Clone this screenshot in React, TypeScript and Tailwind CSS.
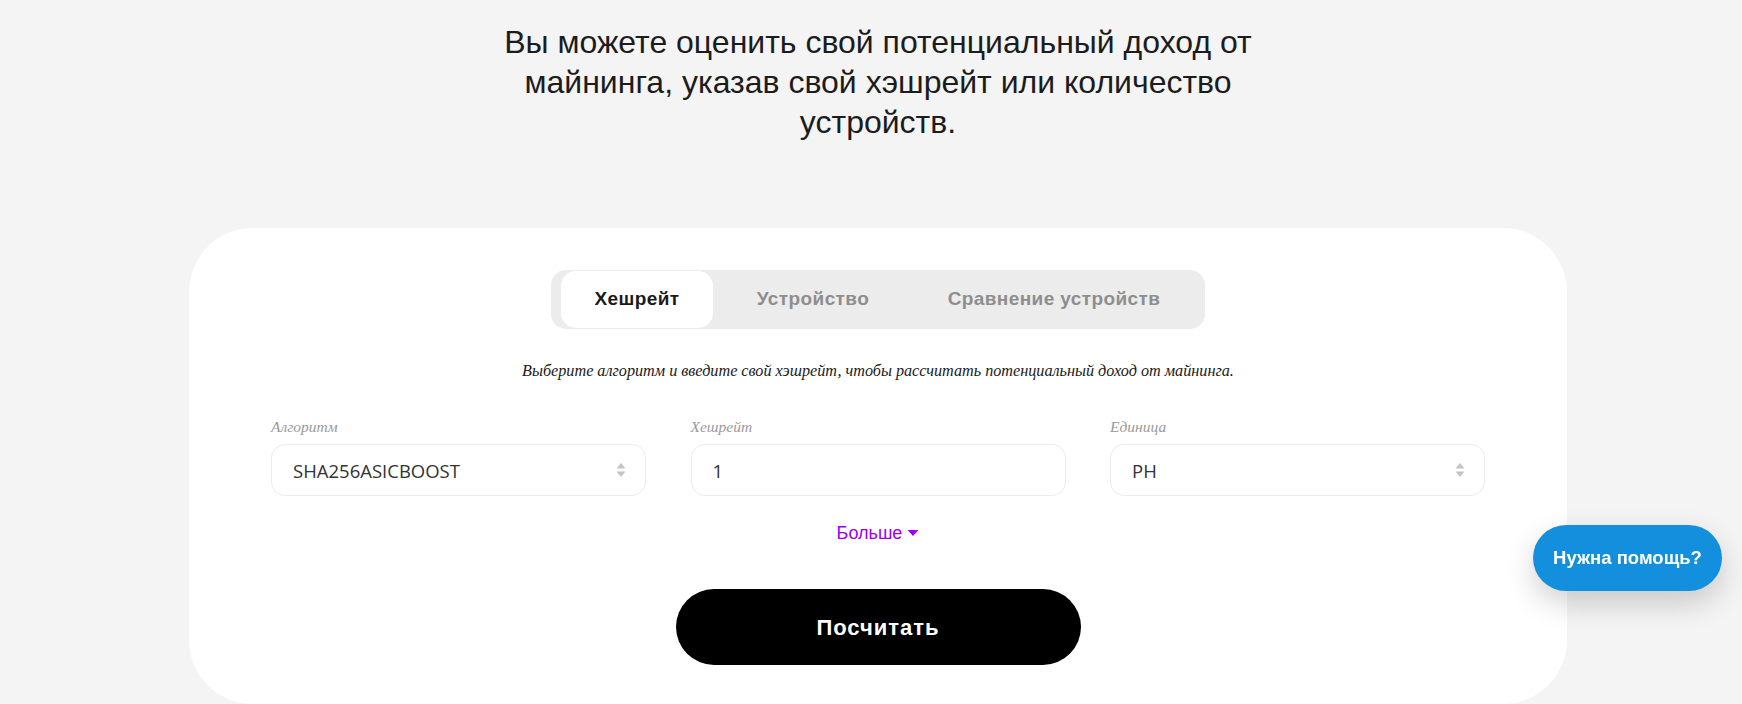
import React, { useState } from 'react';

const tabs = [
  { id: 'hash', label: 'Хешрейт', w: 'w-[152px]' },
  { id: 'device', label: 'Устройство', w: 'w-[200px]' },
  { id: 'compare', label: 'Сравнение устройств', w: 'w-[282px]' },
];

const SelectArrows = () => (
  <svg width="10" height="16" viewBox="0 0 10 16" className="shrink-0">
    <path d="M5 1 L9.5 6.5 L0.5 6.5 Z" fill="#c4c4c4" />
    <path d="M5 15 L9.5 9.5 L0.5 9.5 Z" fill="#c4c4c4" />
  </svg>
);

const Field = ({ label, value, select }: { label: string; value: string; select?: boolean }) => (
  <div className="flex flex-col w-[375px]">
    <label className="font-['Liberation_Serif',serif] italic text-[15.5px] leading-[18px] text-[#9a9a9a] mb-[8px]">
      {label}
    </label>
    <div className="h-[52px] rounded-[14px] border border-[#ececec] bg-white flex items-center justify-between pl-[21px] pr-[19px]">
      <span className="font-['Open_Sans',sans-serif] text-[18.5px] text-[#333] pt-[2px]">{value}</span>
      {select && <SelectArrows />}
    </div>
  </div>
);

export default function App() {
  const [tab, setTab] = useState('hash');

  return (
    <div className="min-h-[704px] bg-[#f4f4f4] overflow-hidden relative">
      <div className="ml-[189px] w-[1378px] flex flex-col items-center">
        <h1 className="pt-[22px] w-[800px] text-center font-['Liberation_Sans',Arial,sans-serif] text-[32px] leading-[40px] text-[#1c1c1c]">
          Вы можете оценить свой потенциальный доход от майнинга, указав свой хэшрейт или количество устройств.
        </h1>

        <div className="mt-[86px] w-full h-[476px] bg-white rounded-[64px] flex flex-col items-center pt-[42px]">
          <div className="h-[59px] bg-[#ececec] rounded-[15px] px-[10px] flex items-stretch py-[1px]">
            {tabs.map(t => (
              <button
                key={t.id}
                onClick={() => setTab(t.id)}
                className={`${t.w} rounded-[15px] font-['Liberation_Sans',Arial,sans-serif] font-bold text-[19px] tracking-[0.4px] ${
                  tab === t.id ? 'bg-white text-[#1a1a1a]' : 'text-[#8e8e8e]'
                }`}
              >
                {t.label}
              </button>
            ))}
          </div>

          <p className="mt-[33px] font-['Liberation_Serif',serif] italic text-[16.2px] leading-[19px] text-[#1a1a1a]">
            Выберите алгоритм и введите свой хэшрейт, чтобы рассчитать потенциальный доход от майнинга.
          </p>

          <div className="mt-[37px] w-[1214px] flex justify-between">
            <Field label="Алгоритм" value="SHA256ASICBOOST" select />
            <Field label="Хешрейт" value="1" />
            <Field label="Единица" value="PH" select />
          </div>

          <button className="mt-[26px] flex items-center gap-[5px] font-['Liberation_Sans',Arial,sans-serif] text-[18px] leading-[22px] text-[#9b00f2]">
            Больше
            <svg width="12" height="8" viewBox="0 0 12 8">
              <path d="M0.5 1 L11.5 1 L6 7 Z" fill="#9b00f2" />
            </svg>
          </button>

          <button className="mt-[45px] w-[405px] h-[76px] rounded-full bg-black text-white font-['Liberation_Sans',Arial,sans-serif] font-bold text-[22px] tracking-[1px]">
            Посчитать
          </button>
        </div>
      </div>

      <button className="fixed left-[1533px] top-[525px] w-[189px] h-[66px] rounded-full bg-[#138fde] text-white font-['Liberation_Sans',Arial,sans-serif] font-bold text-[18.5px] shadow-[0_12px_30px_rgba(0,0,0,0.18)]">
        Нужна помощь?
      </button>
    </div>
  );
}
